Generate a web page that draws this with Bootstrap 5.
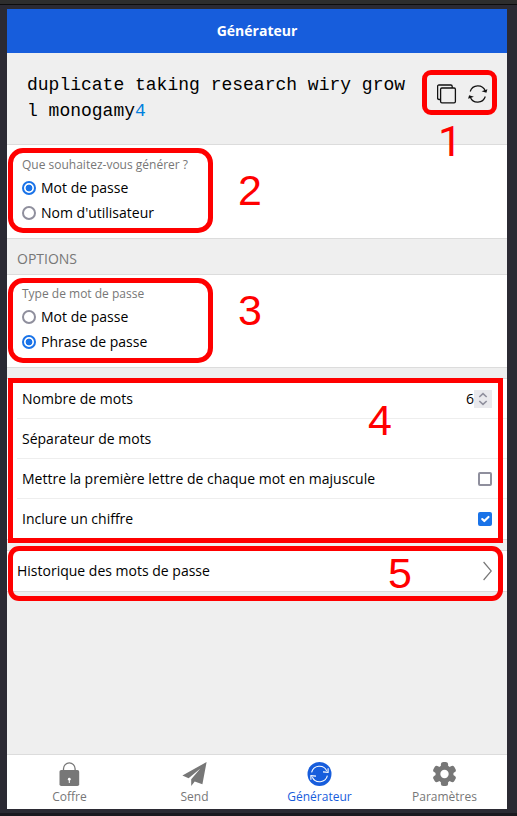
<!DOCTYPE html>
<html lang="fr">
<head>
<meta charset="utf-8">
<meta name="viewport" content="width=device-width, initial-scale=1">
<title>Générateur</title>
<link href="https://cdn.jsdelivr.net/npm/bootstrap@5.3.0/dist/css/bootstrap.min.css" rel="stylesheet">
<style>
body{background:#2b2a33;font-family:"Open Sans","Noto Sans",sans-serif;font-size:14px;line-height:20px;color:#000;height:816px;overflow:hidden}
.window-top{height:5px;background:#2d2d2d;border-bottom:1px solid #0c0c0d}
.window-bottom{height:3px;background:#1a191f}
.popup{width:500px;height:800px;margin:4px 0 4px 7px;background:#efefef}
.popup-header{height:44px;background:#175ddc;font-weight:700}
.generated{height:91px;padding:19px 20px 0;font:18px/26px "Liberation Mono",monospace}
.generated p{width:379px;word-break:break-all}
.generated-digit{color:#007fde}
.tools{padding:12px 0 0 31px;gap:11px}
.box{background:#fff;border-top:1px solid #dcdcdc;border-bottom:1px solid #dcdcdc}
.choice-box{padding:11px 15px 0}
.choice-kind{height:95px}
.choice-type{height:94px;padding-top:10px}
.choice-title{font-size:12px;line-height:18px;color:#777;margin-bottom:1px}
.choice{height:25px;gap:5px}
.choice .form-check-input,.option .form-check-input{margin:0;width:14px;height:14px;border:2px solid #8f8f9d;box-shadow:none;background-color:#fff;flex:none}
.choice .form-check-input:checked{border-color:#1a73e8;background:radial-gradient(circle,#1a73e8 3.1px,#fff 3.7px)}
.option .form-check-input{border-radius:2px}
.option .form-check-input:checked{border-color:#1a73e8;background-color:#1a73e8;background-size:14px;background-origin:border-box}
.section-title{height:35px;padding:4px 10px 0;color:#777}
.spaced{margin-top:10px}
.option{height:40px;margin-left:10px;padding-left:5px;padding-right:15px;border-bottom:1px solid #eee}
.option:last-child{border-bottom:0}
.stepper{width:18px;height:18px;background:#e9e9ed}
.history{height:42px;padding:0 15px 0 10px}
.tabs{height:55px;background:#fff;border-top:1px solid #dcdcdc;font-size:12px;line-height:18px}
.tab{color:#777;padding-top:7px}
.tab svg{margin-bottom:2px}
.tab.current{color:#175ddc}
.callout{position:absolute;border:5px solid red}
.callout-no{position:absolute;color:red;font:43px/44px "Liberation Sans",sans-serif}
.c1{left:422px;top:70px;width:75px;height:45px;border-radius:9px}
.c2{left:8px;top:148px;width:205px;height:85px;border-radius:15px}
.c3{left:8px;top:278px;width:205px;height:85px;border-radius:15px}
.c4{left:8px;top:378px;width:495px;height:165px}
.c5{left:8px;top:546px;width:495px;height:55px;border-radius:11px}
.n1{left:438px;top:119px;font-family:Roboto,sans-serif}
.n2{left:238px;top:168px}
.n3{left:238px;top:288px}
.n4{left:368px;top:398px}
.n5{left:388px;top:551px}
</style>
</head>
<body class="position-relative">
<div class="window-top"></div>
<main class="popup d-flex flex-column">
  <header class="popup-header d-flex align-items-center justify-content-center text-white">Générateur</header>
  <section class="generated d-flex">
    <p class="mb-0 flex-shrink-0">duplicate taking research wiry growl monogamy<span class="generated-digit">4</span></p>
    <div class="tools d-flex align-items-start">
      <svg class="flex-shrink-0" width="20" height="20" viewBox="0 0 20 20" fill="none" stroke="#111" stroke-width="1.3"><rect x="3.6" y="4" width="14.8" height="14.8" rx="1.3"/><path d="M3.6 15.5H2Q.6 15.5 .6 14.1V2.4Q.6 1 2 1H13.8Q15.2 1 15.2 2.4V4"/></svg>
      <svg class="flex-shrink-0" width="20" height="20" viewBox="0 0 20 20"><path d="M2.2 7.5A8 8 0 0 1 17.3 7M17.3 12.5A8 8 0 0 1 2.2 13" fill="none" stroke="#111" stroke-width="1.2"/><path d="M13.6 7.2L19.4 5.2L18.4 8.8ZM5.9 12.8L.1 14.8L1.1 11.2Z" fill="#111"/></svg>
    </div>
  </section>
  <div class="box choice-box choice-kind" role="radiogroup">
    <div class="choice-title">Que souhaitez-vous générer ?</div>
    <label class="choice d-flex align-items-center"><input class="form-check-input" type="radio" name="kind" checked>Mot de passe</label>
    <label class="choice d-flex align-items-center"><input class="form-check-input" type="radio" name="kind">Nom d'utilisateur</label>
  </div>
  <div class="section-title d-flex align-items-center">OPTIONS</div>
  <div class="box choice-box choice-type" role="radiogroup">
    <div class="choice-title">Type de mot de passe</div>
    <label class="choice d-flex align-items-center"><input class="form-check-input" type="radio" name="type">Mot de passe</label>
    <label class="choice d-flex align-items-center"><input class="form-check-input" type="radio" name="type" checked>Phrase de passe</label>
  </div>
  <section class="box spaced">
    <div class="option d-flex align-items-center justify-content-between"><span>Nombre de mots</span>
      <span class="d-flex align-items-center">6<span class="stepper d-flex"><svg width="18" height="18" fill="none" stroke="#8f8f9d" stroke-width="1.6"><path d="M5.3 7L9 3.6L12.7 7M5.3 11L9 14.4L12.7 11"/></svg></span></span></div>
    <div class="option d-flex align-items-center">Séparateur de mots</div>
    <label class="option d-flex align-items-center justify-content-between">Mettre la première lettre de chaque mot en majuscule<input class="form-check-input" type="checkbox"></label>
    <label class="option d-flex align-items-center justify-content-between">Inclure un chiffre<input class="form-check-input" type="checkbox" checked></label>
  </section>
  <div class="box history spaced d-flex align-items-center justify-content-between">Historique des mots de passe
    <svg width="9" height="20" fill="none" stroke="#777" stroke-width="1.2"><path d="M.6 1L8.3 10L.6 19"/></svg>
  </div>
  <nav class="tabs d-flex mt-auto text-center">
    <div class="tab col-3 d-flex flex-column align-items-center">
      <svg width="25" height="24" viewBox="-.3 0 25 24"><path d="M6.2 10V6.7a5.8 5.8 0 0 1 11.6 0V10" fill="none" stroke="currentColor" stroke-width="1.3"/><rect x="2.2" y="8" width="19.7" height="16" rx="1.8" fill="currentColor"/><circle cx="12" cy="17.2" r="1.4" fill="#fff"/><path d="M11.5 17h1v4h-1z" fill="#fff"/></svg>Coffre</div>
    <div class="tab col-3 d-flex flex-column align-items-center">
      <svg width="25" height="24" viewBox=".6 0 25 24" fill="currentColor"><path d="M25.2 0L1 13.4L7.2 16.2L19 6.5L9.8 17.3V24L13.3 19.6L21 22.2Z"/></svg>Send</div>
    <div class="tab current col-3 d-flex flex-column align-items-center">
      <svg width="25" height="24" viewBox="-.5 0 25 24"><circle cx="12" cy="12" r="12" fill="currentColor"/><path d="M4.1 10.4A8.1 8.1 0 0 1 19.2 8.7M19.9 13.6A8.1 8.1 0 0 1 4.8 15.3" fill="none" stroke="#fff" stroke-width="1.1"/><path d="M15.5 9.9L20.6 10.3V6.3M8.5 14.1L3.4 13.7V17.7" fill="none" stroke="#fff" stroke-width="1.1"/></svg>Générateur</div>
    <div class="tab col-3 d-flex flex-column align-items-center">
      <svg width="25" height="24" viewBox="-.5 0 25 24"><g fill="currentColor"><circle cx="12" cy="12" r="9"/><rect x="8.4" y="0" width="7.2" height="24" rx="2.5"/><rect x="8.4" y="0" width="7.2" height="24" rx="2.5" transform="rotate(60 12 12)"/><rect x="8.4" y="0" width="7.2" height="24" rx="2.5" transform="rotate(120 12 12)"/></g><circle cx="12" cy="12" r="4.2" fill="#fff"/></svg>Paramètres</div>
  </nav>
</main>
<div class="window-bottom"></div>
<div class="callout c1"></div><div class="callout-no n1">1</div>
<div class="callout c2"></div><div class="callout-no n2">2</div>
<div class="callout c3"></div><div class="callout-no n3">3</div>
<div class="callout c4"></div><div class="callout-no n4">4</div>
<div class="callout c5"></div><div class="callout-no n5">5</div>
<script src="https://cdn.jsdelivr.net/npm/bootstrap@5.3.0/dist/js/bootstrap.bundle.min.js"></script>
</body>
</html>
